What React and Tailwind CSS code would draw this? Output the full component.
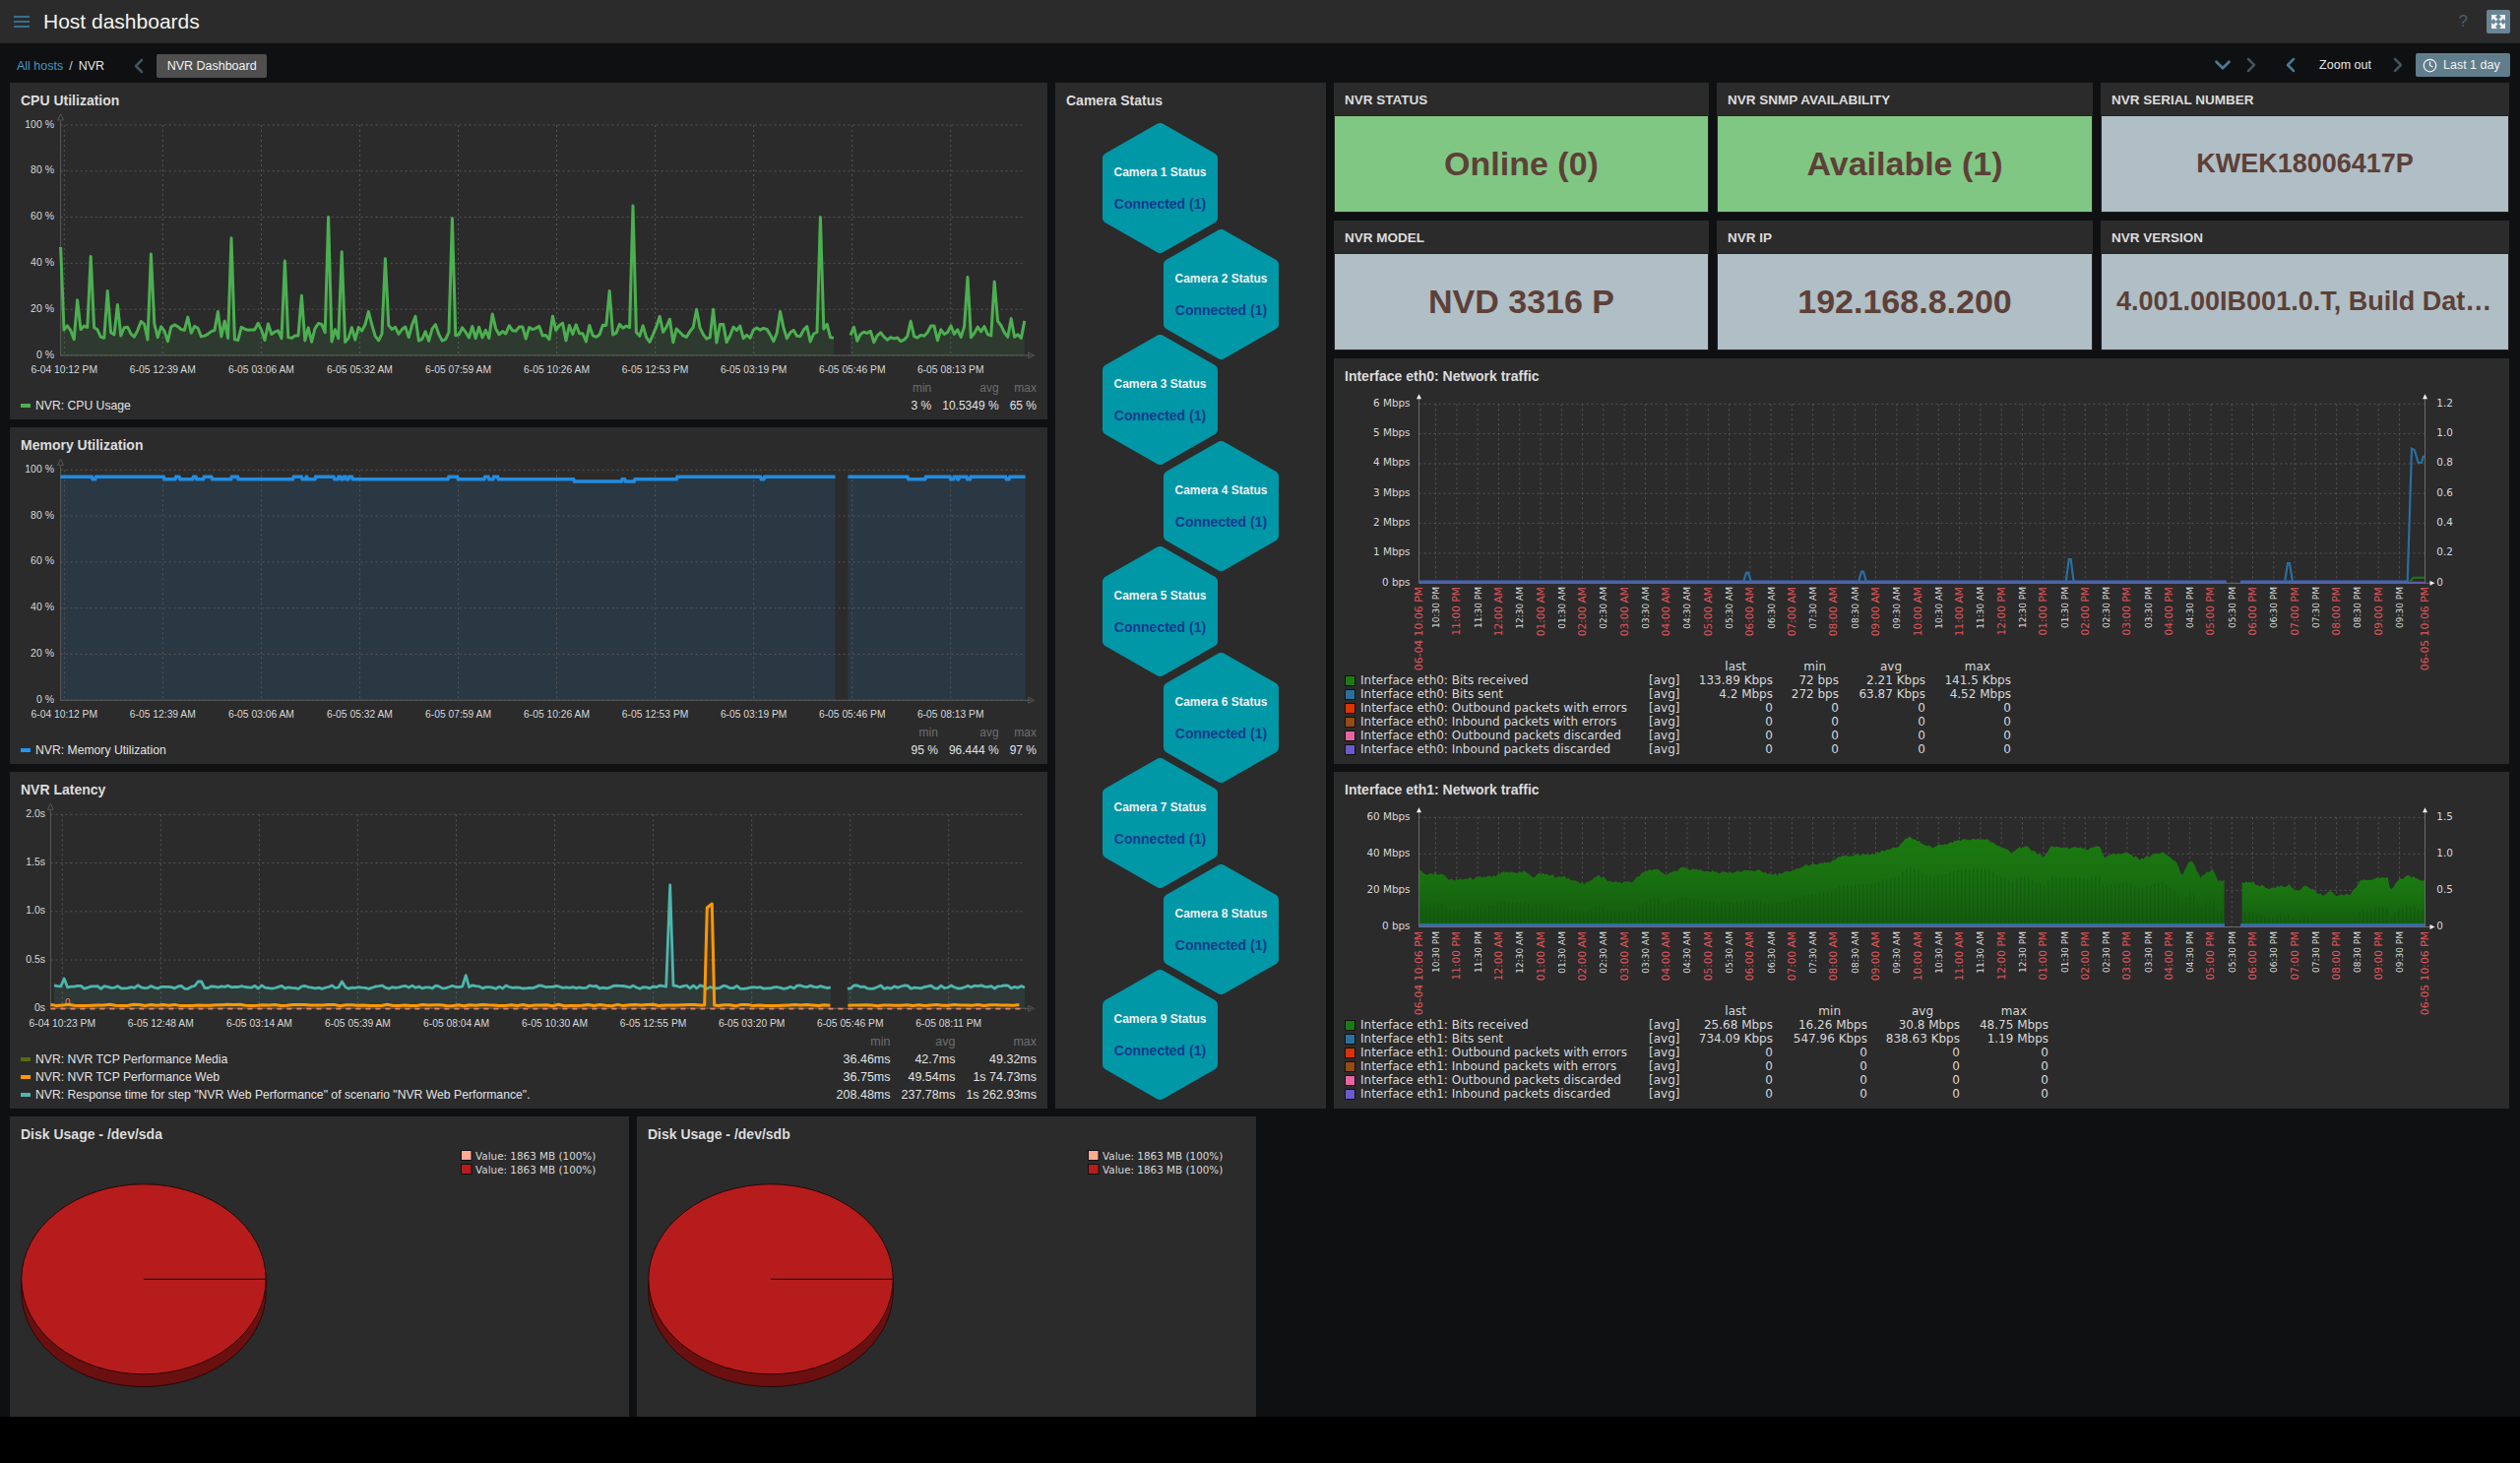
import React from "react";
import { ChevronLeft, ChevronRight, ChevronDown, Clock } from "lucide-react";

function rng(seed) {
  let s = seed;
  return () => {
    s = (s * 16807) % 2147483647;
    return s / 2147483647;
  };
}

const pathOf = (pts) => pts.map((p, i) => `${i ? "L" : "M"}${p[0].toFixed(1)} ${p[1].toFixed(1)}`).join(" ");
const areaOf = (pts, base) =>
  `${pathOf(pts)} L${pts[pts.length - 1][0].toFixed(1)} ${base} L${pts[0][0].toFixed(1)} ${base} Z`;

const XL_A = ["6-04 10:12 PM", "6-05 12:39 AM", "6-05 03:06 AM", "6-05 05:32 AM", "6-05 07:59 AM", "6-05 10:26 AM", "6-05 12:53 PM", "6-05 03:19 PM", "6-05 05:46 PM", "6-05 08:13 PM"];
const XL_B = ["6-04 10:23 PM", "6-05 12:48 AM", "6-05 03:14 AM", "6-05 05:39 AM", "6-05 08:04 AM", "6-05 10:30 AM", "6-05 12:55 PM", "6-05 03:20 PM", "6-05 05:46 PM", "6-05 08:11 PM"];

function Panel({ title, className, children }) {
  return (
    <div className={`bg-[#2b2b2b] ${className}`}>
      <div className="flex h-[33px] items-center px-[11px] pt-[3px] text-[14px] font-bold text-[#dcdcdc]">{title}</div>
      {children}
    </div>
  );
}

function Plot({ x0, y0, w, h, children }) {
  return (
    <svg width={w} height={h} viewBox={`${x0} ${y0} ${w} ${h}`} className="block overflow-visible">
      {children}
    </svg>
  );
}

function SvgGrid({ axisX, top, bottom, right, ys, yLabels, labelEnd, xs, xLabels, tickY }) {
  return (
    <g fontFamily="'Liberation Sans', Arial, sans-serif">
      {ys.map((y) => (
        <line key={y} x1={axisX} x2={right} y1={y} y2={y} stroke="#555" strokeDasharray="2 3" />
      ))}
      {xs.map((x) => (
        <line key={x} x1={x} x2={x} y1={top} y2={bottom} stroke="#555" strokeDasharray="2 3" />
      ))}
      <line x1={axisX} x2={axisX} y1={top - 4} y2={bottom} stroke="#5a5a5a" />
      <line x1={axisX} x2={right + 6} y1={bottom} y2={bottom} stroke="#5a5a5a" />
      <path d={`M${axisX - 3} ${top - 5} L${axisX} ${top - 11} L${axisX + 3} ${top - 5} Z`} fill="none" stroke="#555" />
      <path d={`M${right + 3} ${bottom - 3} L${right + 9} ${bottom} L${right + 3} ${bottom + 3} Z`} fill="none" stroke="#555" />
      {ys.map((y, i) => (
        <text key={y} x={labelEnd} y={y + 2.5} textAnchor="end" fontSize="10.5" fill="#d8d8d8">
          {yLabels[i]}
        </text>
      ))}
      {xs.map((x, i) => (
        <text key={x} x={x} y={tickY} textAnchor="middle" fontSize="10.3" fill="#d8d8d8">
          {xLabels[i]}
        </text>
      ))}
    </g>
  );
}

const PCT = ["100 %", "80 %", "60 %", "40 %", "20 %", "0 %"];
const pctYs = (t, b) => [0, 1, 2, 3, 4, 5].map((i) => t + ((b - t) / 5) * i);
const xsA = [0, 1, 2, 3, 4, 5, 6, 7, 8, 9].map((i) => 65.3 + i * 100.05);
const xsB = [0, 1, 2, 3, 4, 5, 6, 7, 8, 9].map((i) => 63.3 + i * 100.05);

const CPU_SPIKES = [[63, 47], [77.6, 24], [91.4, 43], [108.6, 28], [118.8, 22], [153.5, 44], [220.4, 19], [234.7, 51], [287.8, 41], [306, 26], [334.7, 60], [347.8, 45], [375.5, 19], [392.7, 42], [420.4, 17], [460, 59.5], [500.8, 18], [562, 17], [619.5, 28], [643.7, 65], [708, 20], [723, 20], [792.7, 19], [831.7, 60], [982.7, 34], [1011.7, 32], [1027.7, 16], [1040.7, 15]];

function CpuChart() {
  const r = rng(4711);
  const top = 127;
  const bottom = 361;
  const a = [];
  const b = [];
  for (let x = 61.6; x <= 1041; x += 3.4) {
    if (x > 848 && x < 861) continue;
    let v = x > 848 ? 5 + r() * 8 : 5.5 + r() * 8.5;
    if (r() > 0.9) v += 3;
    const s = CPU_SPIKES.find((p) => Math.abs(p[0] - x) <= 1.7);
    if (s) v = s[1];
    (x < 848 ? a : b).push([x, bottom - v * 2.34]);
  }
  return (
    <Plot x0={10} y0={117} w={1054} h={268}>
      <SvgGrid axisX={61.6} top={top} bottom={bottom} right={1041.7} ys={pctYs(top, bottom)} yLabels={PCT} labelEnd={55} xs={xsA} xLabels={XL_A} tickY={378.5} />
      {[a, b].map((s, i) => (
        <g key={i}>
          <path d={areaOf(s, bottom)} fill="#4caf50" fillOpacity="0.12" />
          <path d={pathOf(s)} fill="none" stroke="#4caf50" strokeWidth="3" strokeLinejoin="round" />
        </g>
      ))}
    </Plot>
  );
}

const MEM_STEPS = [[90, 97], [138, 96], [143, 97], [245, 96], [262, 97], [268, 96], [288, 97], [293, 96], [304, 97], [316, 96], [345, 97], [355, 96], [437, 97], [450, 96], [456, 97], [458, 96], [470, 97], [498, 96], [504, 97], [508, 96], [512, 97], [516, 96], [520, 97], [525, 96], [668, 97], [682, 96], [722, 97], [728, 96], [735, 97], [742, 96], [855, 95], [926, 96], [931, 95], [945, 96], [1008, 97], [1133, 96], [1138, 97], [1243, null], [1262, 97], [1352, 96], [1378, 97], [1415, 96], [1420, 97], [1425, 96], [1428, 97], [1440, 96], [1445, 97], [1498, 96], [1503, 97], [1526, null]];

function MemoryChart() {
  const top = 477.3;
  const bottom = 711.3;
  const yOf = (v) => bottom - v * 2.34;
  const segs = [[], []];
  let cur = 0;
  MEM_STEPS.forEach((st, i) => {
    const x = st[0] / 1.465;
    if (st[1] === null) {
      segs[cur].push([x, yOf(MEM_STEPS[i - 1][1])]);
      cur = 1;
      return;
    }
    if (i > 0 && MEM_STEPS[i - 1][1] !== null) segs[cur].push([x - 1, yOf(MEM_STEPS[i - 1][1])]);
    segs[cur].push([x, yOf(st[1])]);
  });
  return (
    <Plot x0={10} y0={467} w={1054} h={268}>
      {segs.map((s, i) => (
        <path key={i} d={areaOf(s, bottom)} fill="#2a3844" />
      ))}
      <SvgGrid axisX={61.6} top={top} bottom={bottom} right={1041.7} ys={pctYs(top, bottom)} yLabels={PCT} labelEnd={55} xs={xsA} xLabels={XL_A} tickY={728.5} />
      {segs.map((s, i) => (
        <path key={i} d={pathOf(s)} fill="none" stroke="#2196f3" strokeOpacity="0.9" strokeWidth="3.6" />
      ))}
    </Plot>
  );
}

function LatencyChart() {
  const r = rng(93);
  const top = 827.3;
  const bottom = 1024.3;
  const t = [[], []];
  const o = [[], []];
  for (let x = 55; x <= 1041.7; x += 3.4) {
    if (x > 846 && x < 860) continue;
    let y = 1002.6 + (r() - 0.5) * 3.6;
    if (Math.abs(x - 64.5) < 1.8) y = 994;
    if (Math.abs(x - 473.5) < 1.8) y = 990.7;
    if (Math.abs(x - 203) < 1.8) y = 997;
    if (Math.abs(x - 347) < 1.8) y = 997;
    t[x < 846 ? 0 : 1].push([x, y]);
  }
  for (let x = 51.4; x <= 1039; x += 6) {
    if (x > 846 && x < 860) continue;
    const y = 1021 + (r() - 0.5) * 1.5;
    o[x < 846 ? 0 : 1].push([x, y]);
  }
  const insertT = [...t[0].filter((p) => p[0] < 676), [676.7, 1002], [680.7, 899], [684, 1001], ...t[0].filter((p) => p[0] > 685)];
  const insertO = [...o[0].filter((p) => p[0] < 715), [715.7, 1021], [718.3, 922], [723.3, 918], [725.7, 1021], ...o[0].filter((p) => p[0] > 727)];
  const ys = [0, 1, 2, 3, 4].map((i) => top + i * 49.25);
  return (
    <Plot x0={10} y0={817} w={1054} h={232}>
      <SvgGrid axisX={51.4} top={top} bottom={bottom} right={1041.7} ys={ys} yLabels={["2.0s", "1.5s", "1.0s", "0.5s", "0s"]} labelEnd={46} xs={xsB} xLabels={XL_B} tickY={1042.5} />
      <path d={areaOf(insertT, 1024)} fill="#4db6ac" fillOpacity="0.1" />
      <path d={areaOf(t[1], 1024)} fill="#4db6ac" fillOpacity="0.1" />
      <path d={areaOf(insertO, 1024)} fill="#ff9800" fillOpacity="0.12" />
      <path d={pathOf(insertT)} fill="none" stroke="#4db6ac" strokeWidth="2.8" strokeLinejoin="round" />
      <path d={pathOf(t[1])} fill="none" stroke="#4db6ac" strokeWidth="2.8" strokeLinejoin="round" />
      <text x="66" y="1022" fontSize="10" fill="#e8835f" fontFamily="'Liberation Sans', sans-serif">0</text>
      <path d={pathOf(insertO)} fill="none" stroke="#ff9800" strokeWidth="3" strokeLinejoin="round" />
      <path d={pathOf(o[1])} fill="none" stroke="#ff9800" strokeWidth="3" strokeLinejoin="round" />
      <line x1="51.4" x2="1041.7" y1="1024.6" y2="1024.6" stroke="#e8835f" strokeWidth="1.6" strokeDasharray="5 5" />
    </Plot>
  );
}

function SvgLegend({ rows, heads, valueClass }) {
  return (
    <div className={`grid grid-cols-[1fr_auto_auto_auto] gap-x-[11px] pl-[11px] pr-[11px] leading-[18px] text-[#e2e2e2] ${valueClass}`}>
      <div />
      {heads.map((h) => (
        <div key={h} className="text-right text-[#6e6e6e]">{h}</div>
      ))}
      {rows.map((row) => (
        <React.Fragment key={row.name}>
          <div className="flex items-center text-[12.2px]">
            <span className={`mr-[5px] h-[4px] w-[10px] ${row.color}`} />
            {row.name}
          </div>
          {row.vals.map((v, i) => (
            <div key={i} className="text-right">{v}</div>
          ))}
        </React.Fragment>
      ))}
    </div>
  );
}

function fmt(mins) {
  const h24 = Math.floor(mins / 60) % 24;
  const m = mins % 60;
  const h = h24 % 12 === 0 ? 12 : h24 % 12;
  return `${String(h).padStart(2, "0")}:${String(m).padStart(2, "0")} ${h24 < 12 ? "AM" : "PM"}`;
}
const NET_TICKS = Array.from({ length: 47 }, (_, i) => ({ x: 1458.6 + i * 21.28, mins: 22 * 60 + 30 + i * 30 }));

function NetFrame({ y0, h, top, bottom, ys, left, right, labelTop, children }) {
  const leftX = 1441.5;
  const rightX = 2463.5;
  const red = "#e0555a";
  const font = "'DejaVu Sans', sans-serif";
  return (
    <Plot x0={1355} y0={y0} w={1194} h={h}>
      <g fontFamily={font}>
        {ys.map((y) => (
          <line key={y} x1={leftX} x2={rightX} y1={y} y2={y} stroke="#555" strokeDasharray="2 3" />
        ))}
        {NET_TICKS.map((t) => (
          <line key={t.x} x1={t.x} x2={t.x} y1={top} y2={bottom} stroke="#555" strokeDasharray="2 3" />
        ))}
        {children}
        <line x1={leftX} x2={leftX} y1={top - 6} y2={bottom} stroke="#6a6a6a" />
        <line x1={rightX} x2={rightX} y1={top - 6} y2={bottom} stroke="#6a6a6a" />
        <line x1={leftX} x2={rightX + 6} y1={bottom} y2={bottom} stroke="#6a6a6a" />
        <path d={`M${leftX - 2.5} ${top - 5} L${leftX} ${top - 10} L${leftX + 2.5} ${top - 5} Z`} fill="#eee" />
        <path d={`M${rightX - 2.5} ${top - 5} L${rightX} ${top - 10} L${rightX + 2.5} ${top - 5} Z`} fill="#eee" />
        <path d={`M${rightX + 5} ${bottom - 2.5} L${rightX + 10} ${bottom} L${rightX + 5} ${bottom + 2.5} Z`} fill="#eee" />
        {ys.map((y, i) => (
          <text key={y} x={1432.5} y={y + 2.5} textAnchor="end" fontSize="10.4" fill="#d8d8d8">{left[i]}</text>
        ))}
        {ys.map((y, i) => (
          <text key={y} x={2475.3} y={y + 2.5} fontSize="10.4" fill="#d8d8d8">{right[i]}</text>
        ))}
        <text transform={`translate(${leftX + 3.5} ${labelTop}) rotate(-90)`} textAnchor="end" fontSize="10.8" fill={red}>06-04 10:06 PM</text>
        {NET_TICKS.map((t) => {
          const hour = t.mins % 60 === 0;
          return (
            <text key={t.x} transform={`translate(${t.x + 3.5} ${labelTop}) rotate(-90)`} textAnchor="end" fontSize={hour ? 10.6 : 9} fill={hour ? red : "#dddddd"}>
              {fmt(t.mins)}
            </text>
          );
        })}
        <text transform={`translate(${rightX + 3.5} ${labelTop}) rotate(-90)`} textAnchor="end" fontSize="10.8" fill={red}>06-05 10:06 PM</text>
      </g>
    </Plot>
  );
}

function Eth0Chart() {
  const ys = [0, 1, 2, 3, 4, 5, 6].map((i) => 410.3 + i * 30.33);
  const b = 592.3;
  const sp = (x, y) => `M${x - 4} ${b - 1} L${x - 1} ${y} L${x + 1} ${y} L${x + 4} ${b - 1}`;
  return (
    <NetFrame y0={397} h={273} top={410.3} bottom={b} ys={ys} left={["6 Mbps", "5 Mbps", "4 Mbps", "3 Mbps", "2 Mbps", "1 Mbps", "0 bps"]} right={["1.2", "1.0", "0.8", "0.6", "0.4", "0.2", "0"]} labelTop={596}>
      <line x1="1441.5" x2="2261.7" y1="591.6" y2="591.6" stroke="#6a55cc" strokeWidth="1.6" />
      <line x1="2276" x2="2463" y1="591.6" y2="591.6" stroke="#6a55cc" strokeWidth="1.6" />
      <line x1="1441.5" x2="2261.7" y1="590.6" y2="590.6" stroke="#3f66c0" strokeWidth="2.4" />
      <line x1="2276" x2="2446" y1="590.6" y2="590.6" stroke="#3f66c0" strokeWidth="2.4" />
      <path d={`${sp(1775, 581.7)} ${sp(1892, 580.7)} ${sp(2102.7, 568)} ${sp(2325, 572)}`} fill="none" stroke="#2a6f9e" strokeWidth="2.2" />
      <path d="M2448 591 L2451.7 586.7 L2463 586.7" fill="none" stroke="#1b7a11" strokeWidth="2" />
      <path d="M2445.7 591 L2450 455.7 L2452.7 457 L2456.7 470 L2460 470 L2461.7 464 L2463 463" fill="none" stroke="#2a6f9e" strokeWidth="2.2" />
    </NetFrame>
  );
}

const ETH1 = [[1441.6, 885], [1448, 888], [1461.5, 887.3], [1476, 894], [1495, 892], [1520, 890], [1529, 885.7], [1541, 887.5], [1547.8, 884], [1556, 891.5], [1565.7, 887.7], [1592, 892], [1609, 897.7], [1625, 889.3], [1636, 896], [1658, 896], [1670, 885], [1684.5, 882.7], [1694, 888.3], [1708.7, 881.7], [1757, 887], [1776.5, 883], [1805.6, 888.3], [1842, 877.3], [1859, 876], [1871, 870], [1902.6, 867], [1927, 861], [1938, 850], [1963, 860.7], [1984, 854.7], [2015.7, 851.3], [2043, 865.7], [2056.6, 859], [2076.8, 870.7], [2083, 860.7], [2118.9, 862.3], [2133.6, 860], [2137.8, 871.3], [2156.7, 865.7], [2173.6, 872.3], [2196.7, 865.7], [2211.5, 877.3], [2216.5, 890.7], [2223.2, 875.7], [2228.3, 875.7], [2234.6, 891.3], [2248.5, 881.7], [2252.7, 894], [2259.8, 894.7], [2275.8, 897.3], [2286.4, 895.7], [2304, 902.3], [2327, 899], [2331, 905.7], [2344, 899.7], [2358.8, 909], [2369.3, 905.7], [2373.5, 910], [2388, 908], [2398.7, 894], [2426, 891.3], [2428, 905.7], [2436.6, 892.3], [2449, 890], [2459.8, 895.7], [2464, 891.7]];

function Eth1Chart() {
  const r = rng(555);
  const ys = [830.3, 867.3, 904.3, 941.5];
  const b = 941.5;
  const interp = (x) => {
    for (let i = 1; i < ETH1.length; i++) {
      if (x <= ETH1[i][0]) {
        const a = ETH1[i - 1];
        const c = ETH1[i];
        return a[1] + ((x - a[0]) / (c[0] - a[0])) * (c[1] - a[1]);
      }
    }
    return 891.7;
  };
  const s1 = [];
  const s2 = [];
  for (let x = 1441.6; x <= 2464; x += 2) {
    if (x > 2259.8 && x < 2275.8) continue;
    (x < 2260 ? s1 : s2).push([x, interp(x) + (r() - 0.5) * 3]);
  }
  return (
    <NetFrame y0={817} h={203} top={830.3} bottom={b} ys={ys} left={["60 Mbps", "40 Mbps", "20 Mbps", "0 bps"]} right={["1.5", "1.0", "0.5", "0"]} labelTop={946}>
      <defs>
        <linearGradient id="eth1fill" x1="0" y1="0" x2="0" y2="1">
          <stop offset="0" stopColor="#1b7a10" />
          <stop offset="0.45" stopColor="#197010" />
          <stop offset="1" stopColor="#145a10" />
        </linearGradient>
        <pattern id="eth1stripe" width="4" height="8" patternUnits="userSpaceOnUse">
          <rect width="1.5" height="8" fill="#0f4e0c" fillOpacity="0.4" />
        </pattern>
      </defs>
      {[s1, s2].map((s, i) => (
        <g key={i}>
          <path d={areaOf(s, b)} fill="url(#eth1fill)" />
          <path d={areaOf(s.map((p) => [p[0], p[1] + 30]), b)} fill="url(#eth1stripe)" />
        </g>
      ))}
      <line x1="1441.6" x2="2260" y1="939.4" y2="939.4" stroke="#2c6ea6" strokeWidth="3" />
      <line x1="2276" x2="2464" y1="939.4" y2="939.4" stroke="#2c6ea6" strokeWidth="3" />
      <line x1="1441.6" x2="2260" y1="941" y2="941" stroke="#6a55cc" strokeWidth="1" />
      <line x1="2276" x2="2464" y1="941" y2="941" stroke="#6a55cc" strokeWidth="1" />
    </NetFrame>
  );
}

const NET_COLORS = ["bg-[#1b7a11]", "bg-[#2a6f9e]", "bg-[#dd3300]", "bg-[#964b14]", "bg-[#e664a0]", "bg-[#6a5acd]"];
const NET_NAMES = ["Bits received", "Bits sent", "Outbound packets with errors", "Inbound packets with errors", "Outbound packets discarded", "Inbound packets discarded"];

function NetLegend({ iface, cols, vals, heads }) {
  return (
    <div className={`grid ${cols} pl-[11px] font-['DejaVu_Sans',sans-serif] text-[12px] leading-[14px] text-[#d8d8d8]`}>
      <div />
      <div />
      {heads.map((h) => (
        <div key={h[0]} className={`text-right ${h[1]}`}>{h[0]}</div>
      ))}
      {NET_NAMES.map((n, i) => (
        <React.Fragment key={n}>
          <div className="flex items-center">
            <span className={`mr-[5px] h-[11px] w-[11px] border border-[#111] ${NET_COLORS[i]}`} />
            {`Interface ${iface}: ${n}`}
          </div>
          <div>[avg]</div>
          {vals[i].map((v, j) => (
            <div key={j} className="text-right">{v}</div>
          ))}
        </React.Fragment>
      ))}
    </div>
  );
}

function Pie() {
  const cx = 146;
  const cy = 1299.3;
  const rx = 124.2;
  const ry = 96.5;
  const d = 12.7;
  return (
    <Plot x0={10} y0={1167} w={629} h={272}>
      <path d={`M${cx - rx} ${cy} L${cx - rx} ${cy + d} A${rx} ${ry} 0 0 0 ${cx + rx} ${cy + d} L${cx + rx} ${cy} Z`} fill="#6b1010" stroke="#2a0606" strokeWidth="1" />
      <ellipse cx={cx} cy={cy} rx={rx} ry={ry} fill="#b71c1c" stroke="#2a0606" strokeWidth="1" />
      <line x1={cx} x2={cx + rx} y1={cy} y2={cy} stroke="#2a0606" strokeWidth="1.2" />
      <g fontFamily="'DejaVu Sans', sans-serif" fontSize="10.4" fill="#d8d8d8">
        <rect x="468.5" y="1168.5" width="10.5" height="10" fill="#ffab91" stroke="#111" />
        <text x="483" y="1177.5">Value: 1863 MB (100%)</text>
        <rect x="468.5" y="1182.5" width="10.5" height="10" fill="#b71c1c" stroke="#111" />
        <text x="483" y="1191.5">Value: 1863 MB (100%)</text>
      </g>
    </Plot>
  );
}

function Hex({ n, odd }) {
  return (
    <div className={`relative h-[132px] w-[117px] ${odd ? "ml-[48px]" : "ml-[110px]"} ${n > 1 ? "-mt-[24.5px]" : ""}`}>
      <svg className="absolute inset-0" width="117" height="132" viewBox="0 0 117 132">
        <polygon points="58.5,6 111,36 111,96 58.5,126 6,96 6,36" fill="#0097a7" stroke="#0097a7" strokeWidth="12" strokeLinejoin="round" />
      </svg>
      <div className="relative flex flex-col items-center pt-[41px]">
        <div className="text-[12px] font-bold leading-[18px] text-[#f2f2f2]">{`Camera ${n} Status`}</div>
        <div className="mt-[14px] text-[14px] font-bold leading-[18px] text-[#0d3b8c]">Connected (1)</div>
      </div>
    </div>
  );
}

function Tile({ title, value, green, size }) {
  return (
    <div className="h-[132px] bg-[#2b2b2b]">
      <div className="flex h-[33px] items-center px-[11px] pt-[3px] text-[13.5px] font-bold text-[#dcdcdc]">{title}</div>
      <div className={`flex h-[99px] items-center justify-center border border-[#222] px-[15px] font-bold text-[#5d4037] ${green ? "bg-[#81c784]" : "bg-[#b0bec5]"} ${size}`}>
        <span className="truncate">{value}</span>
      </div>
    </div>
  );
}

export default function App() {
  const eth0Vals = [
    ["133.89 Kbps", "72 bps", "2.21 Kbps", "141.5 Kbps"],
    ["4.2 Mbps", "272 bps", "63.87 Kbps", "4.52 Mbps"],
    ["0", "0", "0", "0"], ["0", "0", "0", "0"], ["0", "0", "0", "0"], ["0", "0", "0", "0"],
  ];
  const eth1Vals = [
    ["25.68 Mbps", "16.26 Mbps", "30.8 Mbps", "48.75 Mbps"],
    ["734.09 Kbps", "547.96 Kbps", "838.63 Kbps", "1.19 Mbps"],
    ["0", "0", "0", "0"], ["0", "0", "0", "0"], ["0", "0", "0", "0"], ["0", "0", "0", "0"],
  ];
  return (
    <div className="min-h-[1486px] bg-black font-['Liberation_Sans',Arial,sans-serif]">
      <div className="h-[1439px] bg-[#0e1012]">
        <header className="flex h-[44px] items-center justify-between border-b border-[#262626] bg-[#2b2b2b] pl-[14px] pr-[10px]">
          <div className="flex items-center">
            <div className="flex w-[16px] flex-col gap-[3px]">
              <span className="h-[2px] bg-[#35708f]" />
              <span className="h-[2px] bg-[#35708f]" />
              <span className="h-[2px] bg-[#35708f]" />
            </div>
            <h1 className="ml-[14px] pt-[1px] text-[21px] text-[#f2f2f2]">Host dashboards</h1>
          </div>
          <div className="flex items-center">
            <span className="mr-[19px] text-[17px] text-[#4b5e6b]">?</span>
            <div className="flex h-[24px] w-[24px] items-center justify-center rounded-[2px] bg-[#6a8596]">
              <svg width="18" height="18" viewBox="0 0 18 18" fill="#f2f2f2">
                <path d="M2 2h6L6 4l2.5 2.5L6.5 8.5 4 6 2 8z" />
                <path d="M16 2h-6l2 2-2.5 2.5 2 2L14 6l2 2z" />
                <path d="M2 16h6l-2-2 2.5-2.5-2-2L4 12l-2-2z" />
                <path d="M16 16h-6l2-2-2.5-2.5 2-2L14 12l2-2z" />
              </svg>
            </div>
          </div>
        </header>
        <div className="flex h-[40px] items-end justify-between pb-[5px] pl-[17px] pr-[10px] text-[12.5px]">
          <div className="flex items-center">
            <span className="text-[#4796c4]">All hosts</span>
            <span className="mx-[6px] text-[#cfcfcf]">/</span>
            <span className="text-[#e6e6e6]">NVR</span>
            <ChevronLeft size={24} strokeWidth={2.5} className="ml-[23px] text-[#3f5563]" />
            <div className="ml-[6px] flex h-[24px] w-[112px] items-center justify-center rounded-[2px] bg-[#4f4f4f] text-[#f2f2f2]">NVR Dashboard</div>
          </div>
          <div className="flex items-center text-[#e6e6e6]">
            <ChevronDown size={26} strokeWidth={2.5} className="text-[#4a7a96]" />
            <ChevronRight size={24} strokeWidth={2.5} className="ml-[4px] text-[#3f5563]" />
            <ChevronLeft size={24} strokeWidth={2.5} className="ml-[16px] text-[#4a7a96]" />
            <span className="ml-[17px] w-[53px] whitespace-nowrap text-center">Zoom out</span>
            <ChevronRight size={24} strokeWidth={2.5} className="ml-[15px] text-[#3f5563]" />
            <div className="ml-[6px] flex h-[24px] w-[96px] items-center rounded-[2px] bg-[#607d8b] pl-[7px] text-[#f2f2f2]">
              <Clock size={15} strokeWidth={2} />
              <span className="ml-[6px]">Last 1 day</span>
            </div>
          </div>
        </div>
        <div className="pl-[10px]">
          <div className="flex h-[1042px] gap-[8px]">
            <div className="flex w-[1054px] flex-col gap-[8px]">
              <Panel title="CPU Utilization" className="h-[342px]">
                <CpuChart />
                <SvgLegend valueClass="text-[12px]" heads={["min", "avg", "max"]} rows={[{ name: "NVR: CPU Usage", color: "bg-[#4caf50]", vals: ["3 %", "10.5349 %", "65 %"] }]} />
              </Panel>
              <Panel title="Memory Utilization" className="h-[342px]">
                <MemoryChart />
                <SvgLegend valueClass="text-[12px]" heads={["min", "avg", "max"]} rows={[{ name: "NVR: Memory Utilization", color: "bg-[#2196f3]", vals: ["95 %", "96.444 %", "97 %"] }]} />
              </Panel>
              <Panel title="NVR Latency" className="h-[342px]">
                <LatencyChart />
                <SvgLegend
                  valueClass="text-[12.5px]"
                  heads={["min", "avg", "max"]}
                  rows={[
                    { name: "NVR: NVR TCP Performance Media", color: "bg-[#556b10]", vals: ["36.46ms", "42.7ms", "49.32ms"] },
                    { name: "NVR: NVR TCP Performance Web", color: "bg-[#ff9800]", vals: ["36.75ms", "49.54ms", "1s 74.73ms"] },
                    { name: 'NVR: Response time for step "NVR Web Performance" of scenario "NVR Web Performance".', color: "bg-[#4db6ac]", vals: ["208.48ms", "237.78ms", "1s 262.93ms"] },
                  ]}
                />
              </Panel>
            </div>
            <Panel title="Camera Status" className="w-[275px]">
              <div className="flex flex-col pt-[8px]">
                {[1, 2, 3, 4, 5, 6, 7, 8, 9].map((n) => (
                  <Hex key={n} n={n} odd={n % 2 === 1} />
                ))}
              </div>
            </Panel>
            <div className="flex w-[1194px] flex-col gap-[8px]">
              <div className="grid grid-cols-[381px_382px_415px] gap-[8px]">
                <Tile title="NVR STATUS" value="Online (0)" green size="text-[34px]" />
                <Tile title="NVR SNMP AVAILABILITY" value="Available (1)" green size="text-[34px]" />
                <Tile title="NVR SERIAL NUMBER" value="KWEK18006417P" size="text-[27px]" />
                <Tile title="NVR MODEL" value="NVD 3316 P" size="text-[34px]" />
                <Tile title="NVR IP" value="192.168.8.200" size="text-[34px]" />
                <Tile title="NVR VERSION" value="4.001.00IB001.0.T, Build Date: 2018-03-20" size="text-[27px]" />
              </div>
              <Panel title="Interface eth0: Network traffic" className="h-[412px]">
                <Eth0Chart />
                <NetLegend
                  iface="eth0"
                  cols="grid-cols-[309px_40px_86px_67px_88px_87px]"
                  vals={eth0Vals}
                  heads={[["last", "pr-[27px]"], ["min", "pr-[13px]"], ["avg", "pr-[24px]"], ["max", "pr-[21px]"]]}
                />
              </Panel>
              <Panel title="Interface eth1: Network traffic" className="h-[342px]">
                <Eth1Chart />
                <NetLegend
                  iface="eth1"
                  cols="grid-cols-[309px_40px_86px_96px_94px_90px]"
                  vals={eth1Vals}
                  heads={[["last", "pr-[27px]"], ["min", "pr-[27px]"], ["avg", "pr-[27px]"], ["max", "pr-[22px]"]]}
                />
              </Panel>
            </div>
          </div>
          <div className="mt-[8px] flex gap-[8px]">
            <Panel title="Disk Usage - /dev/sda" className="h-[305px] w-[629px]">
              <Pie />
            </Panel>
            <Panel title="Disk Usage - /dev/sdb" className="h-[305px] w-[629px]">
              <Pie />
            </Panel>
          </div>
        </div>
      </div>
    </div>
  );
}
